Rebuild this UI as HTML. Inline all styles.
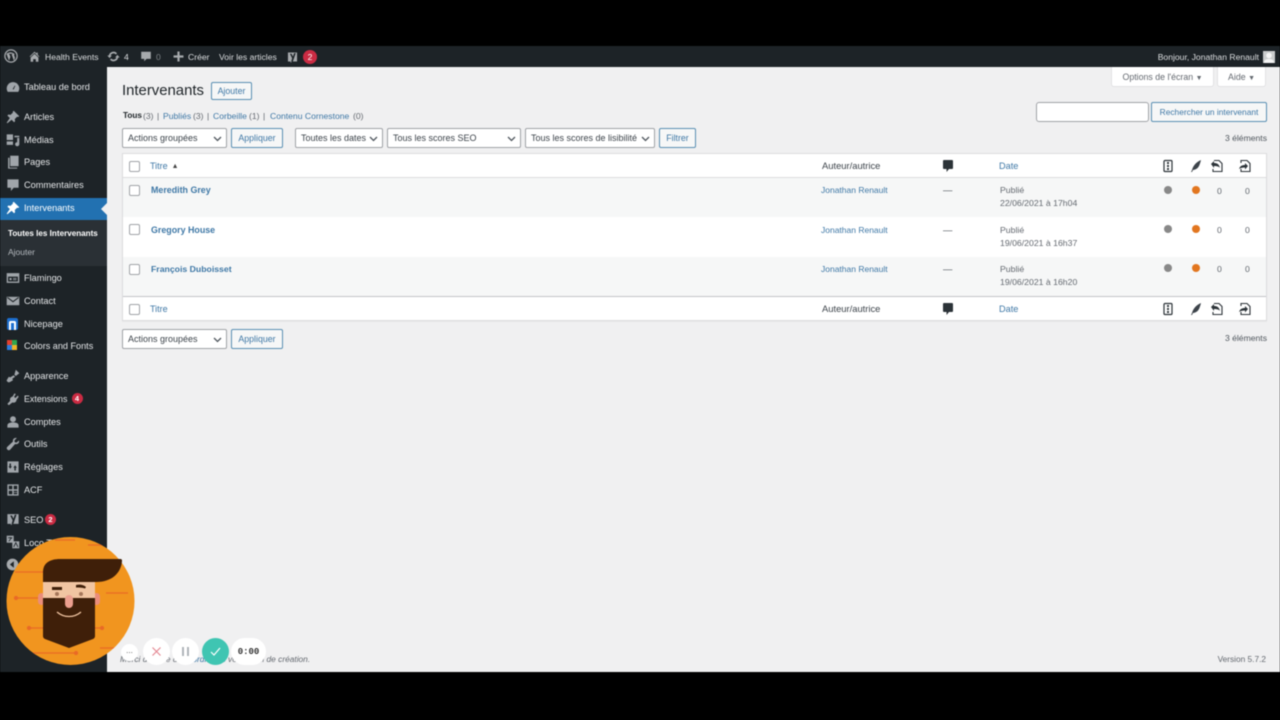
<!DOCTYPE html>
<html lang="fr"><head><meta charset="utf-8"><title>Intervenants</title>
<style>
*{box-sizing:border-box}
html,body{margin:0;padding:0;width:1280px;height:720px;overflow:hidden;background:#000;font-family:"Liberation Sans",sans-serif;font-size:9.4px;color:#50575e}
#p{position:absolute;left:0;top:46px;width:1280px;height:626px;background:#f0f0f1;overflow:hidden;filter:blur(.4px)}
.a,.t{position:absolute;white-space:nowrap}
.t{line-height:12px;transform:translateY(-6px)}
#bar{position:absolute;left:0;top:0;width:1280px;height:21px;background:#1d2327}
#bar .t{color:#dcdee0;font-size:8.6px}
#side{position:absolute;left:0;top:21px;width:107px;height:605px;background:#1d2327}
#side .t{color:#e4e6e8;font-size:9.2px;left:24px}
.ic{position:absolute;left:6px;width:14px;height:14px;fill:#a0a5aa}
.btn{position:absolute;border:1px solid #5a8fb3;background:#f6f7f7;border-radius:2px;color:#3f78a6;font-size:8.800px;text-align:center;height:20px;line-height:19px}
.sel{position:absolute;border:1px solid #a0a3a7;background:#fff;border-radius:2px;color:#3c434a;font-size:9px;height:20px;line-height:19px;padding-left:5px}
.sel svg{position:absolute;right:4px;top:7px;width:9px;height:6px}
.l{color:#3f78a6}
.cb{position:absolute;left:129px;width:11px;height:11px;border:1px solid #a0a3a7;border-radius:2px;background:#fff}
.dot{position:absolute;width:8px;height:8px;border-radius:50%}
.badge{position:absolute;background:#ca2b43;color:#fff;border-radius:50%;width:11px;height:11px;font-size:7.500px;line-height:11px;text-align:center;font-weight:bold}
.ci{position:absolute;width:14px;height:14px}
.s{font-size:8.600px;color:#646970}
.d{font-size:8.700px;color:#646970}
.u{font-size:8.500px}
.h{font-size:9.400px;color:#3c434a}
.b{font-weight:bold;font-size:8.900px}
</style></head><body>
<div id="p">
<div id="bar">
<svg class="a" style="left:4px;top:3px;width:14px;height:14px" viewBox="0 0 20 20"><circle cx="10" cy="10" r="8.700" fill="none" stroke="#a7aaad" stroke-width="1.800"/><path d="M3.600 7.200l3.600 9.600 1.900-5.500-1.300-3.700-1-.1v-.8h5.200v.8l-1.100.1 3.400 9.500 1-3.200c.5-1.500.3-2.600-.4-3.700-.5-.9-.7-1.500 0-2.400l.1-.7c-2-2.200-6.800-3.400-10-1.200-.8.5-1.500 1.100-2 1.900h2v.8z" fill="#a7aaad"/></svg>
<svg class="a" style="left:28px;top:4px;width:13px;height:13px" viewBox="0 0 20 20" fill="#a7aaad"><path d="M16 8.500l1.500 1.500-1 .8L10 4.500 3.500 10.800l-1-.8L10 2.500l3 2.900V4h2v3.300zM10 6l6 5.800V18h-4v-4H8v4H4v-6.200z"/></svg>
<span class="t" style="left:45px;top:11px">Health Events</span>
<svg class="a" style="left:107px;top:4px;width:13px;height:13px" viewBox="0 0 20 20"><path d="M4 10a6 6 0 0 1 10.500-4M16 10a6 6 0 0 1-10.500 4" fill="none" stroke="#a7aaad" stroke-width="2.600"/><path d="M0.500 8.500h7l-3.500 4zM19.500 11.500h-7l3.500-4z" fill="#a7aaad"/></svg>
<span class="t" style="left:124px;top:11px">4</span>
<svg class="a" style="left:140px;top:4px;width:12px;height:13px" viewBox="0 0 20 20" fill="#a7aaad"><path d="M2 2h16v12h-7l-4 4v-4H2z"/></svg>
<span class="t" style="left:156px;top:11px;color:#7d8286">0</span>
<svg class="a" style="left:173px;top:5px;width:11px;height:11px" viewBox="0 0 20 20" fill="#a7aaad"><path d="M8 1h4v7h7v4h-7v7H8v-7H1V8h7z"/></svg>
<span class="t" style="left:188px;top:11px">Créer</span>
<span class="t" style="left:219px;top:11px">Voir les articles</span>
<svg class="a" style="left:286px;top:4px;width:13px;height:14px" viewBox="0 0 20 20"><path d="M3 3h14v14H9l-2 2v-2H3z" fill="#a7aaad"/><path d="M6 5l3.500 7L8 17h2.500L15 4h-2.500l-1.800 5.500L8.500 5z" fill="#1d2327"/></svg>
<span class="badge" style="left:303px;top:4px;width:14px;height:14px;line-height:14px;font-size:8.500px;font-weight:normal">2</span>
<span class="t" style="right:21px;top:11px">Bonjour, Jonathan Renault</span>
<div class="a" style="left:1263px;top:5px;width:12px;height:12px;background:#c9cbcc"><svg style="display:block" width="12" height="12" viewBox="0 0 12 12" fill="#f4f4f4"><circle cx="6" cy="4.500" r="2.800"/><path d="M1 12c0-3 2-4 5-4s5 1 5 4z"/></svg></div>
</div>

<div id="side">
<div class="a" style="left:0;top:131px;width:107px;height:22px;background:#2271b1"></div>
<div class="a" style="left:0;top:153px;width:107px;height:46px;background:#2a3035"></div>
<div class="a" style="left:101px;top:136px;width:0;height:0;border:6px solid transparent;border-left:0;border-right-color:#f0f0f1"></div>
<span class="t" style="top:19.500px;">Tableau de bord</span>
<span class="t" style="top:49.500px">Articles</span>
<span class="t" style="top:72.500px">Médias</span>
<span class="t" style="top:95px">Pages</span>
<span class="t" style="top:118px">Commentaires</span>
<span class="t" style="top:140.500px;color:#fff">Intervenants</span>
<span class="t" style="left:8px;top:166.500px;color:#fff;font-weight:bold;font-size:8.100px">Toutes les Intervenants</span>
<span class="t" style="left:8px;top:185px;color:#b4b9be;font-size:8.500px">Ajouter</span>
<span class="t" style="top:210.500px">Flamingo</span>
<span class="t" style="top:233.500px">Contact</span>
<span class="t" style="top:256.500px">Nicepage</span>
<span class="t" style="top:279px;font-size:9.100px">Colors and Fonts</span>
<span class="t" style="top:309px">Apparence</span>
<span class="t" style="top:332px;font-size:8.900px">Extensions</span>
<span class="badge" style="left:71.500px;top:326px">4</span>
<span class="t" style="top:354.500px">Comptes</span>
<span class="t" style="top:377px">Outils</span>
<span class="t" style="top:400px">Réglages</span>
<span class="t" style="top:422.500px">ACF</span>
<span class="t" style="top:452.500px">SEO</span>
<span class="badge" style="left:45px;top:447px">2</span>
<span class="t" style="top:475.500px">Loco Translate</span>

<svg class="ic" style="top:13px" viewBox="0 0 20 20"><path d="M10 3a9 9 0 0 0-9 9c0 2 .7 3.600 1.500 5h15c.8-1.400 1.500-3 1.500-5a9 9 0 0 0-9-9z"/><path d="M9.500 13l3-5 .8.4-2.400 5.200z" fill="#1d2327"/></svg>
<svg class="ic" style="top:43px" viewBox="0 0 20 20"><path d="M11 1l8 8-2 1-1-.500-3.500 3.500.5 3-1.500 1.500-3.500-3.500L2 19l-1-1 4.500-6.500L2 8l1.500-1.500 3 .5L10 3.500 9.500 2.500z"/></svg>
<svg class="ic" style="top:66px" viewBox="0 0 20 20"><path d="M1 2h9v8H1zM12 4h7v2h-7zM16 7h3v9a3 3 0 0 1-6 0 3 3 0 0 1 3-2.800zM1 12h9v5H1z"/></svg>
<svg class="ic" style="top:88px" viewBox="0 0 20 20"><path d="M6 1h12v15H6z"/><path d="M3 4h2v14h11v1.500H3z"/></svg>
<svg class="ic" style="top:111px" viewBox="0 0 20 20"><path d="M2 2h16v12h-7l-4 4.500V14H2z"/></svg>
<svg class="ic" style="top:134px;fill:#fff" viewBox="0 0 20 20"><path d="M11 1l8 8-2 1-1-.500-3.500 3.500.5 3-1.500 1.500-3.500-3.500L2 19l-1-1 4.500-6.500L2 8l1.500-1.500 3 .5L10 3.500 9.500 2.500z"/></svg>
<svg class="ic" style="top:204px" viewBox="0 0 20 20"><path fill-rule="evenodd" d="M1 3h18v14H1zM3 8v7h14V8zM5 10h3v3H5zM10 10h5v1h-5zM10 12h5v1h-5z"/></svg>
<svg class="ic" style="top:227px" viewBox="0 0 20 20"><path d="M1 4h18v12H1z"/><path d="M2 5l8 6 8-6" fill="none" stroke="#1d2327" stroke-width="1.500"/></svg>
<div class="a" style="left:7px;top:250.500px;width:11px;height:12px;background:#1d6fd0;border-radius:2px"></div>
<div class="a" style="left:9px;top:253.500px;width:7px;height:9px;border:2px solid #fff;border-bottom:0;border-radius:2px 2px 0 0"></div>
<div class="a" style="left:7px;top:273px;width:5px;height:5px;background:#e2402f"></div><div class="a" style="left:12px;top:273px;width:5px;height:5px;background:#2fa84f"></div>
<div class="a" style="left:7px;top:278px;width:5px;height:5px;background:#2b7de0"></div><div class="a" style="left:12px;top:278px;width:5px;height:5px;background:#f0b429"></div>
<svg class="ic" style="top:302px" viewBox="0 0 20 20"><path d="M14 1l5 5-5 4-2-2zM11 9l2 2-4 3 1 2-5 3H3L1 17v-1l3-5 2 1z"/></svg>
<svg class="ic" style="top:325px" viewBox="0 0 20 20"><path d="M12 2l2 1-2.500 4 2 1.500L17 5l1 2-3 4c0 3-3 5-6 4l-5 4-2-2 4-4.500c-1-3 .5-5 3.500-6z"/></svg>
<svg class="ic" style="top:348px" viewBox="0 0 20 20"><circle cx="10" cy="6" r="4.200"/><path d="M2 18v-3c0-3 3-4.500 8-4.500s8 1.500 8 4.500v3z"/></svg>
<svg class="ic" style="top:370px" viewBox="0 0 20 20"><path d="M18.500 5l-3.500 3-2.500-.5-.5-2.500 3.500-3.500c-3-1-6.500 1.500-5.500 5L2 14a2.800 2.800 0 0 0 4 4l7-8c3.500 1 6.500-1.500 5.500-5z"/></svg>
<svg class="ic" style="top:393px" viewBox="0 0 20 20"><path fill-rule="evenodd" d="M2 2h16v16H2zM5 5v4H3.500L6 12.500 8.500 9H7V5zM12 15v-4h-1.500L13 7.500l2.500 3.500H14v4z"/></svg>
<svg class="ic" style="top:416px" viewBox="0 0 20 20"><path fill-rule="evenodd" d="M2 2h16v16H2zM4 4v5h5V4zM11 4v5h5V4zM4 11v5h5v-5zM11 11v2h5v-2zM11 14v2h5v-2z"/></svg>
<svg class="ic" style="top:445px" viewBox="0 0 20 20"><path d="M2 3h16v14H9l-2 2v-2H2z"/><path d="M6 5l3.500 7L8 17h2.500L15 4h-2.500l-1.800 5.500L8.500 5z" fill="#1d2327"/></svg>
<svg class="ic" style="top:468px" viewBox="0 0 20 20"><path d="M1 1h10v10H1z"/><path d="M9 9h10v10H9z"/><path d="M3 4h6M6 3v1M4 9l4-5M11 17l3-6 3 6" fill="none" stroke="#1d2327" stroke-width="1.200"/></svg>
<svg class="a" style="left:6px;top:491px;width:13px;height:13px" viewBox="0 0 20 20"><circle cx="10" cy="10" r="9" fill="#a7aaad"/><path d="M12 5v10l-6-5z" fill="#1d2327"/></svg>
</div>

<!-- top screen tabs -->
<div class="a" style="left:1111px;top:21px;width:103px;height:20px;background:#fff;border:1px solid #e2e2e4;border-top:0;border-radius:0 0 3px 3px;color:#646970;font-size:8.800px;line-height:21px;text-align:center">Options de l'écran <span style="font-size:7px">▼</span></div>
<div class="a" style="left:1217px;top:21px;width:49px;height:20px;background:#fff;border:1px solid #e2e2e4;border-top:0;border-radius:0 0 3px 3px;color:#646970;font-size:8.800px;line-height:21px;text-align:center">Aide <span style="font-size:7px">▼</span></div>

<span class="t" style="left:122px;top:45px;font-size:14.900px;line-height:18px;transform:translateY(-9px);color:#1d2327">Intervenants</span>
<div class="btn" style="left:211px;top:36px;width:41px;height:18px;line-height:17px">Ajouter</div>

<span class="t" style="left:123px;top:70px;font-size:8.200px;color:#1d2327;font-weight:bold">Tous</span>
<span class="t s" style="left:143px;top:70px">(3)</span><span class="t s" style="left:157px;top:70px">|</span>
<span class="t l s" style="left:163px;top:70px;color:#3f78a6">Publiés</span><span class="t s" style="left:193px;top:70px">(3)</span><span class="t s" style="left:207px;top:70px">|</span>
<span class="t l s" style="left:213px;top:70px;color:#3f78a6">Corbeille</span><span class="t s" style="left:249px;top:70px">(1)</span><span class="t s" style="left:263px;top:70px">|</span>
<span class="t l s" style="left:270px;top:70px;color:#3f78a6">Contenu Cornestone</span><span class="t s" style="left:353px;top:70px">(0)</span>

<div class="sel" style="left:122px;top:82px;width:105px">Actions groupées<svg viewBox="0 0 9 6"><path d="M1 1l3.500 3.500L8 1" fill="none" stroke="#50575e" stroke-width="1.300"/></svg></div>
<div class="btn" style="left:231px;top:82px;width:52px">Appliquer</div>
<div class="sel" style="left:295px;top:82px;width:88px">Toutes les dates<svg viewBox="0 0 9 6"><path d="M1 1l3.500 3.500L8 1" fill="none" stroke="#50575e" stroke-width="1.300"/></svg></div>
<div class="sel" style="left:387px;top:82px;width:134px">Tous les scores SEO<svg viewBox="0 0 9 6"><path d="M1 1l3.500 3.500L8 1" fill="none" stroke="#50575e" stroke-width="1.300"/></svg></div>
<div class="sel" style="left:525px;top:82px;width:130px">Tous les scores de lisibilité<svg viewBox="0 0 9 6"><path d="M1 1l3.500 3.500L8 1" fill="none" stroke="#50575e" stroke-width="1.300"/></svg></div>
<div class="btn" style="left:659px;top:82px;width:37px">Filtrer</div>

<div class="a" style="left:1036px;top:56px;width:113px;height:20px;background:#fff;border:1px solid #a0a3a7;border-radius:3px"></div>
<div class="btn" style="left:1151px;top:56px;width:116px;font-size:8.400px">Rechercher un intervenant</div>
<span class="t" style="right:13px;top:92px;font-size:8.600px;color:#50575e">3 éléments</span>

<!-- table -->
<div class="a" style="left:122px;top:107px;width:1145px;height:168px;background:#fff;border:1px solid #dcdcde;box-shadow:0 1px 1px rgba(0,0,0,.04)"></div>
<div class="a" style="left:123px;top:131px;width:1143px;height:1px;background:#dcdcde"></div>
<div class="a" style="left:123px;top:132px;width:1143px;height:39px;background:#f6f7f7"></div>
<div class="a" style="left:123px;top:211px;width:1143px;height:39px;background:#f6f7f7"></div>
<div class="a" style="left:123px;top:250px;width:1143px;height:1px;background:#c3c4c7"></div>

<!-- header -->
<div class="cb" style="top:115px"></div>
<span class="t l" style="left:150px;top:120px;font-size:9px">Titre<span style="font-size:7px;color:#444;vertical-align:1px;margin-left:4px">▲</span></span>
<span class="t h" style="left:822px;top:120px">Auteur/autrice</span>
<svg class="ci" style="left:941px;top:113px" viewBox="0 0 14 14" fill="#2c3338"><path d="M3 1h8a1 1 0 0 1 1 1v7a1 1 0 0 1-1 1H8l-2.500 3V10H3a1 1 0 0 1-1-1V2a1 1 0 0 1 1-1z"/></svg>
<span class="t l" style="left:999px;top:120px;font-size:9.200px">Date</span>

<!-- footer row -->
<div class="cb" style="top:258px"></div>
<span class="t l" style="left:150px;top:263px;font-size:9px">Titre</span>
<span class="t h" style="left:822px;top:263px">Auteur/autrice</span>
<svg class="ci" style="left:941px;top:256px" viewBox="0 0 14 14" fill="#2c3338"><path d="M3 1h8a1 1 0 0 1 1 1v7a1 1 0 0 1-1 1H8l-2.500 3V10H3a1 1 0 0 1-1-1V2a1 1 0 0 1 1-1z"/></svg>
<span class="t l" style="left:999px;top:263px;font-size:9.200px">Date</span>

<!-- yoast header icons -->
<svg class="ci" style="left:1161px;top:113px" viewBox="0 0 14 14"><rect x="3" y="1.500" width="8" height="11" rx="1" fill="none" stroke="#2c3338" stroke-width="1.200"/><circle cx="7" cy="4" r="1.100" fill="#2c3338"/><circle cx="7" cy="7" r="1.100" fill="#2c3338"/><circle cx="7" cy="10" r="1.100" fill="#2c3338"/></svg>
<svg class="ci" style="left:1189px;top:113px" viewBox="0 0 14 14" fill="#3c434a"><path d="M2 13l1-2c1-4 4-8 9-10-1 4-2 7-4 8.500-1.500 1-3 1.500-4 1.500l-1 2z"/></svg>
<svg class="ci" style="left:1210px;top:113px" viewBox="0 0 14 14"><path d="M4 1.500h5l3 3v8H3V10" fill="none" stroke="#2c3338" stroke-width="1.100"/><path d="M1 5l3-3v2c3 0 5 1 6 5-1-1.500-3-2-6-2v2z" fill="#2c3338"/></svg>
<svg class="ci" style="left:1238px;top:113px" viewBox="0 0 14 14"><path d="M3 4V1.500h6l3 3v8H3V10" fill="none" stroke="#2c3338" stroke-width="1.100"/><path d="M10 7L7 4v2C4 6 2 7 1 10c1.500-1 3.500-1.500 6-1.500v2z" fill="#2c3338"/></svg>
<svg class="ci" style="left:1161px;top:256px" viewBox="0 0 14 14"><rect x="3" y="1.500" width="8" height="11" rx="1" fill="none" stroke="#2c3338" stroke-width="1.200"/><circle cx="7" cy="4" r="1.100" fill="#2c3338"/><circle cx="7" cy="7" r="1.100" fill="#2c3338"/><circle cx="7" cy="10" r="1.100" fill="#2c3338"/></svg>
<svg class="ci" style="left:1189px;top:256px" viewBox="0 0 14 14" fill="#3c434a"><path d="M2 13l1-2c1-4 4-8 9-10-1 4-2 7-4 8.500-1.500 1-3 1.500-4 1.500l-1 2z"/></svg>
<svg class="ci" style="left:1210px;top:256px" viewBox="0 0 14 14"><path d="M4 1.500h5l3 3v8H3V10" fill="none" stroke="#2c3338" stroke-width="1.100"/><path d="M1 5l3-3v2c3 0 5 1 6 5-1-1.500-3-2-6-2v2z" fill="#2c3338"/></svg>
<svg class="ci" style="left:1238px;top:256px" viewBox="0 0 14 14"><path d="M3 4V1.500h6l3 3v8H3V10" fill="none" stroke="#2c3338" stroke-width="1.100"/><path d="M10 7L7 4v2C4 6 2 7 1 10c1.500-1 3.500-1.500 6-1.500v2z" fill="#2c3338"/></svg>

<!-- row 1 -->
<div class="cb" style="top:139px"></div>
<span class="t l b" style="left:151px;top:144px">Meredith Grey</span>
<span class="t l u" style="left:821px;top:144px">Jonathan Renault</span>
<span class="t" style="left:943px;top:144px">—</span>
<span class="t d" style="left:1000px;top:144px">Publié</span>
<span class="t d" style="left:1000px;top:157px">22/06/2021 à 17h04</span>
<div class="dot" style="left:1164px;top:139.500px;background:#888"></div>
<div class="dot" style="left:1192px;top:139.500px;background:#e2761f"></div>
<span class="t d" style="left:1217px;top:145px">0</span>
<span class="t d" style="left:1245px;top:145px">0</span>

<!-- row 2 -->
<div class="cb" style="top:178px"></div>
<span class="t l b" style="left:151px;top:183.500px">Gregory House</span>
<span class="t l u" style="left:821px;top:183.500px">Jonathan Renault</span>
<span class="t" style="left:943px;top:183.500px">—</span>
<span class="t d" style="left:1000px;top:183.500px">Publié</span>
<span class="t d" style="left:1000px;top:196.500px">19/06/2021 à 16h37</span>
<div class="dot" style="left:1164px;top:179px;background:#888"></div>
<div class="dot" style="left:1192px;top:179px;background:#e2761f"></div>
<span class="t d" style="left:1217px;top:184px">0</span>
<span class="t d" style="left:1245px;top:184px">0</span>

<!-- row 3 -->
<div class="cb" style="top:218px"></div>
<span class="t l b" style="left:151px;top:223px;font-size:8.700px">François Duboisset</span>
<span class="t l u" style="left:821px;top:223px">Jonathan Renault</span>
<span class="t" style="left:943px;top:223px">—</span>
<span class="t d" style="left:1000px;top:223px">Publié</span>
<span class="t d" style="left:1000px;top:236px">19/06/2021 à 16h20</span>
<div class="dot" style="left:1164px;top:218px;background:#888"></div>
<div class="dot" style="left:1192px;top:218px;background:#e2761f"></div>
<span class="t d" style="left:1217px;top:223px">0</span>
<span class="t d" style="left:1245px;top:223px">0</span>

<!-- bottom nav -->
<div class="sel" style="left:122px;top:283px;width:105px">Actions groupées<svg viewBox="0 0 9 6"><path d="M1 1l3.500 3.500L8 1" fill="none" stroke="#50575e" stroke-width="1.300"/></svg></div>
<div class="btn" style="left:231px;top:283px;width:52px">Appliquer</div>
<span class="t" style="right:13px;top:292px;font-size:8.600px;color:#50575e">3 éléments</span>

<!-- footer -->
<span class="t" style="left:120px;top:613px;font-size:8.350px;font-style:italic;color:#646970">Merci de faire de <span class="l">WordPress</span> votre outil de création.</span>
<span class="t" style="right:14px;top:613px;font-size:8.300px;color:#646970">Version 5.7.2</span>

<!-- avatar (svg origin = y 530 in page) -->
<svg class="a" style="left:0;top:484px;width:145px;height:142px;overflow:visible" viewBox="0 0 145 142">
<defs><clipPath id="c"><circle cx="70.500" cy="71" r="64"/></clipPath></defs>
<circle cx="70.500" cy="71" r="64" fill="#f1951f"/>
<g clip-path="url(#c)" stroke="#e96a26" stroke-width="1.300" fill="#e96a26">
<path d="M55 10H75M88 15H103M15 42H44M106 63H128M15 68H38M28 98H44M95 98H103M33 123H77M100 118H120" fill="none"/>
<circle cx="16" cy="68" r="1.500"/><circle cx="29" cy="98" r="1.500"/><circle cx="76" cy="123" r="1.500"/><circle cx="102" cy="98" r="1.500"/>
</g>
<rect x="38" y="63" width="7" height="12" rx="3.500" fill="#ea8d7b"/><rect x="93" y="63" width="7" height="12" rx="3.500" fill="#ea8d7b"/>
<rect x="43" y="50" width="52" height="20" fill="#f1c5a2"/>
<path d="M43 52V42c0-9 7-13 17-13h60c2 0 2 1 2 2-1 12-10 21-26 21H43z" fill="#3f1f09"/>
<path d="M43 68H95V106Q95 108 93 109L69 118 45 109Q43 108 43 106z" fill="#3f1f09"/>
<path d="M52 57h10v3H52zM76 55c4-1 8 0 10 2l-1 1.500c-3-1-6-1-9-1z" fill="#3f1f09"/>
<circle cx="57" cy="64" r="2" fill="#a5765a"/><circle cx="81" cy="64" r="2" fill="#a5765a"/>
<rect x="65" y="65" width="8" height="13" rx="4" fill="#ec9f8f"/>
<path d="M57 82c7 6 17 6 24 0" fill="none" stroke="#f1c5a2" stroke-width="1.300"/>
</svg>

<!-- recorder controls -->
<div class="a" style="left:121px;top:598px;width:17px;height:17px;border-radius:50%;background:#fff;color:#555;font-size:8px;text-align:center;line-height:14px">...</div>
<div class="a" style="left:143px;top:592px;width:27px;height:27px;border-radius:50%;background:#fff"><svg style="display:block;margin:8px" width="11" height="11" viewBox="0 0 11 11"><path d="M1.500 1.500l8 8M9.500 1.500l-8 8" stroke="#e58a95" stroke-width="1.200"/></svg></div>
<div class="a" style="left:172px;top:592px;width:27px;height:27px;border-radius:50%;background:#fff"><svg style="display:block;margin:8px" width="11" height="11" viewBox="0 0 11 11"><path d="M3 1v9M8 1v9" stroke="#a9adb3" stroke-width="1.800"/></svg></div>
<div class="a" style="left:202px;top:592px;width:27px;height:27px;border-radius:50%;background:#3fc5b2"><svg style="display:block;margin:8px" width="11" height="11" viewBox="0 0 11 11"><path d="M1 6l3 3 6-7" fill="none" stroke="#fff" stroke-width="1.200"/></svg></div>
<div class="a" style="left:231px;top:592px;width:35px;height:27px;border-radius:14px;background:#fff;color:#333;font:bold 9px/28px 'Liberation Mono',monospace;text-align:center">0:00</div>
</div>
</body></html>
